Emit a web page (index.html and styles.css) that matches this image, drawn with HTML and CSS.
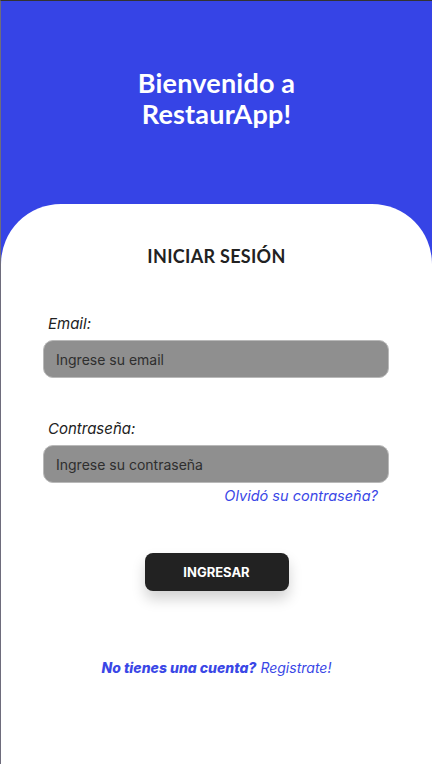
FILE: index.html
```html
<!DOCTYPE html>
<html lang="es">
<head>
<meta charset="utf-8">
<title>RestaurApp - Iniciar sesión</title>
<link rel="stylesheet" href="styles.css">
</head>
<body>
<div class="screen">
  <header class="hero">
    <h1 class="hero-title">Bienvenido a<br>RestaurApp!</h1>
  </header>
  <main class="card">
    <h2 class="card-title">INICIAR SESIÓN</h2>
    <form class="form">
      <div class="field">
        <label class="label" for="email">Email:</label>
        <input class="input" id="email" type="email" placeholder="Ingrese su email">
      </div>
      <div class="field field-pass">
        <label class="label" for="pass">Contraseña:</label>
        <input class="input" id="pass" type="password" placeholder="Ingrese su contraseña">
        <a class="forgot" href="#">Olvidó su contraseña?</a>
      </div>
      <div class="actions">
        <button class="btn" type="button">INGRESAR</button>
      </div>
    </form>
    <p class="register"><strong>No tienes una cuenta?</strong> <a href="#">Registrate!</a></p>
  </main>
</div>
</body>
</html>
```
FILE: styles.css
```css
* { box-sizing: border-box; }
html, body { margin: 0; padding: 0; height: 100%; }
body {
  background: #fff;
  font-family: Inter, "Noto Sans", sans-serif;
}
.screen {
  height: 764px;
  border-top: 1px solid #333;
  border-left: 1px solid #6e6c7c;
  background: #3644e6;
  display: flex;
  flex-direction: column;
  overflow: hidden;
}
.hero {
  height: 203px;
  display: flex;
  justify-content: center;
  padding-top: 66px;
  flex-shrink: 0;
}
.hero-title {
  margin: 0;
  color: #fff;
  font-family: Lato, sans-serif;
  font-weight: 700;
  font-size: 27px;
  line-height: 31px;
  text-align: center;
  letter-spacing: 0.2px;
}
.card {
  flex: 1;
  background: #fff;
  border-radius: 60px 60px 0 0;
  padding: 40px 42px 0 42px;
  display: flex;
  flex-direction: column;
}
.card-title {
  margin: 0;
  text-align: center;
  font-family: Lato, sans-serif;
  font-weight: 700;
  font-size: 18px;
  line-height: 24px;
  color: #222;
  letter-spacing: 0.3px;
}
.form {
  margin-top: 46px;
  display: flex;
  flex-direction: column;
}
.field {
  display: flex;
  flex-direction: column;
}
.field-pass { margin-top: 41px; }
.label {
  font-style: italic;
  font-size: 15px;
  line-height: 20px;
  color: #222;
  padding-left: 5px;
  margin-bottom: 6px;
}
.input {
  height: 38px;
  width: 346px;
  border: 1px solid #b9b9b9;
  border-radius: 10px;
  background: #8f8f8f;
  padding: 0 12px;
  font-family: Inter, sans-serif;
  font-size: 14px;
  color: #222;
  outline: none;
}
.input::placeholder { color: #2e2e2e; }
.forgot {
  align-self: flex-end;
  margin-right: 12px;
  margin-top: 3px;
  font-style: italic;
  font-size: 14.5px;
  line-height: 20px;
  color: #3a47e6;
  text-decoration: none;
}
.actions {
  display: flex;
  justify-content: center;
  margin-top: 47px;
}
.btn {
  width: 144px;
  height: 38px;
  border: none;
  border-radius: 8px;
  background: #222;
  color: #fff;
  font-family: Inter, sans-serif;
  font-weight: 700;
  font-size: 13px;
  box-shadow: 0 8px 14px rgba(0,0,0,0.18);
  cursor: pointer;
}
.register {
  margin: 67px 0 0 0;
  text-align: center;
  font-style: italic;
  font-size: 14px;
  line-height: 20px;
  color: #3a47e6;
}
.register strong { font-weight: 800; }
.register a { color: #3a47e6; text-decoration: none; }
```
